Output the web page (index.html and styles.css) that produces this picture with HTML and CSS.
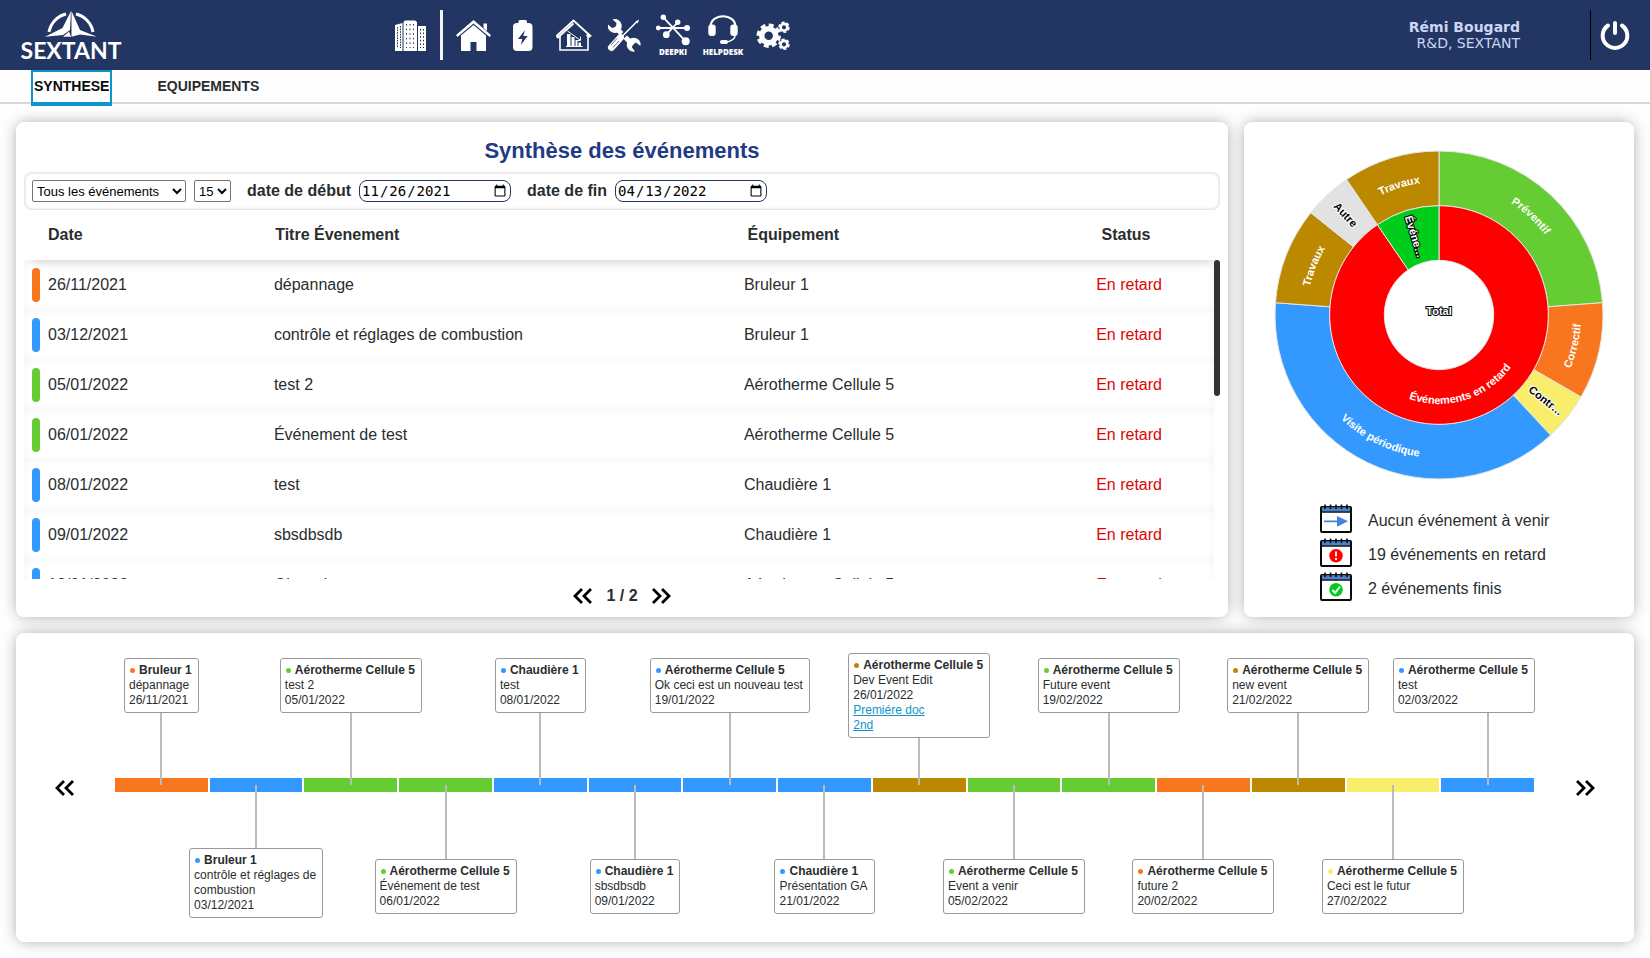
FILE: index.html
```html
<!DOCTYPE html>
<html lang="fr">
<head>
  <meta charset="UTF-8" />
  <meta name="viewport" content="width=device-width, initial-scale=1" />
  <title>Sextant - Synthèse des événements</title>
  <link rel="stylesheet" href="styles.css">
</head>
<body>
  <!-- Shared icons -->
  <svg class="sprite" aria-hidden="true">
    <symbol id="chevrons-left" viewBox="0 0 20 16">
      <path d="M9 1 L2 8 L9 15 M18 1 L11 8 L18 15" fill="none" stroke="#000" stroke-width="2.8" />
    </symbol>
    <symbol id="chevrons-right" viewBox="0 0 20 16">
      <path d="M2 1 L9 8 L2 15 M11 1 L18 8 L11 15" fill="none" stroke="#000" stroke-width="2.8" />
    </symbol>
    <symbol id="calendar" viewBox="0 0 32 30">
      <rect x="1" y="3" width="30" height="25" rx="1" fill="#fff" stroke="#0b0b0b" stroke-width="2" />
      <rect x="2" y="3" width="28" height="4.5" fill="#4682cf" />
      <path d="M1 8 H31 M1 2.6 H31" stroke="#0b0b0b" stroke-width="1.4" />
      <path d="M5 0.5 V5 M10.5 0.5 V5 M16 0.5 V5 M21.5 0.5 V5 M27 0.5 V5" stroke="#0b0b0b" stroke-width="1.6" />
    </symbol>
  </svg>

  <header class="topbar">
    <a class="logo" href="#" aria-label="Sextant">
      <svg width="104" height="50" viewBox="0 0 104 50" fill="#fff">
        <path d="M29 22 A22.5 22.5 0 0 1 46 4" fill="none" stroke="#fff" stroke-width="3" />
        <path d="M56 4 A22.5 22.5 0 0 1 73 22" fill="none" stroke="#fff" stroke-width="3" />
        <path d="M51 1 L42.5 18 L25 26.7 L43 25 L50 20 Z" />
        <path d="M51.5 1 L60 20 L77 26.7 L60 24.5 L51.5 26.7 Z" />
        <path d="M49 21.5 L43 26.7 H51 Z" />
        <text class="logo-text" x="51" y="49" text-anchor="middle">SEXTANT</text>
      </svg>
    </a>

    <nav class="main-nav" aria-label="Navigation principale">
      <a href="#" aria-label="Bâtiments">
        <svg viewBox="0 0 50 50" fill="#fff">
          <path d="M10 15 L17.5 13 V41 H10 Z M18.5 12 L20 10.5 H30 L32 12 V41 H18.5 Z M33 16 H41 V41 H33 Z" />
          <path d="M12.5 17 V38 M15.5 16 V38" stroke="#233563" stroke-width="1" stroke-dasharray="1.6 1" />
          <path d="M21.5 14 V38 M25 14 V38 M28.5 14 V38" stroke="#233563" stroke-width="1" stroke-dasharray="1.6 3" />
          <path d="M35.5 19 V38 M38.5 19 V38" stroke="#233563" stroke-width="1" stroke-dasharray="1.6 2" />
        </svg>
      </a>
      <span class="nav-separator"></span>
      <a href="#" aria-label="Accueil">
        <svg viewBox="0 0 50 50" fill="#fff">
          <path d="M25.5 10 L43 25 L41.5 27 L25.5 13.5 L9.5 27 L8 25 Z" />
          <path d="M35.5 13.5 H39 V21 L35.5 18 Z" />
          <path d="M25.5 15 L38 25.5 V41 H28.5 V32 H22.5 V41 H13 V25.5 Z" />
        </svg>
      </a>
      <a href="#" aria-label="Énergie">
        <svg viewBox="0 0 50 50" fill="#fff">
          <path d="M20.5 14 V11.5 Q20.5 10 22 10 H27.5 Q29 10 29 11.5 V14 Z" />
          <rect x="15" y="13" width="19.5" height="28" rx="4" />
          <path d="M27 20 L20 29 H24.3 L22.8 35 L29.7 26 H25.2 Z" fill="#233563" />
        </svg>
      </a>
      <a href="#" aria-label="Consommations">
        <svg viewBox="0 0 50 50" fill="#fff">
          <path d="M8.5 26 L25.5 10.5 L42.5 26 L41 27 L38.5 25 M8.5 26 L10 27.5 L25.5 13.5" fill="none" stroke="#fff" stroke-width="1.8" />
          <path d="M12 25 V40 H40 V25" fill="none" stroke="#fff" stroke-width="1.6" />
          <path d="M19 24 H22.5 V36 H19 Z M23.5 27 H26.5 V36 H23.5 Z M27.5 30 H29.5 V36 H27.5 Z M30.5 32.5 H33 V36 H30.5 Z M18 36 H34.5 V37 H18 Z" />
          <path d="M19.5 21 L32 30 M32.5 26.5 V30.5 H28.5" fill="none" stroke="#fff" stroke-width="1" />
        </svg>
      </a>
      <a href="#" aria-label="Maintenance">
        <svg viewBox="0 0 50 50" fill="#fff">
          <path d="M17 17 L35 35" stroke="#fff" stroke-width="5" />
          <path d="M14.5 9.5 A7 7 0 1 1 10 14.5 L14 18 L18 17 L18.5 13 Z" />
          <path d="M37 41.5 A7 7 0 1 1 42.5 36 L38 32.5 L34.5 34 L34 37.5 Z" />
          <path d="M40 10.5 L22 29" stroke="#233563" stroke-width="5" />
          <path d="M39 11.5 L22 28.5" stroke="#fff" stroke-width="1.6" />
          <path d="M37.5 11.5 L41 9.5 L39.8 13.5 Z" />
          <path d="M23 27 L14 37" stroke="#233563" stroke-width="10" />
          <path d="M22.5 27.5 L13.5 37.5" stroke="#fff" stroke-width="7" stroke-linecap="round" />
          <path d="M21 31 L15 37.5 M19 28.5 L13 35" stroke="#233563" stroke-width="0.7" />
        </svg>
      </a>
      <a href="#" aria-label="Deepki">
        <svg viewBox="0 0 50 50" fill="#fff">
          <path d="M15.3 7.3 L37.7 31.3 M29.7 12.3 L18.3 24.7 M10.3 18 H39" stroke="#fff" stroke-width="1.8" />
          <circle cx="15.3" cy="7.3" r="2.7" />
          <circle cx="29.7" cy="12.3" r="2.7" />
          <circle cx="10.3" cy="18" r="2.4" />
          <circle cx="39" cy="18" r="3" />
          <circle cx="18.3" cy="24.7" r="3.4" />
          <circle cx="37.7" cy="31.3" r="4" />
          <text class="nav-label" x="25" y="45" text-anchor="middle">DEEPKI</text>
        </svg>
      </a>
      <a href="#" aria-label="Helpdesk">
        <svg viewBox="0 0 50 50" fill="#fff">
          <path d="M12.5 17 C12.5 2.5 37.5 2.5 37.5 17" fill="none" stroke="#fff" stroke-width="2" />
          <rect x="10.3" y="14.5" width="7.4" height="11.5" rx="3" />
          <rect x="32.3" y="14.5" width="7.4" height="11.5" rx="3" />
          <path d="M37.5 24 Q37 31.5 27 32" fill="none" stroke="#fff" stroke-width="1.4" />
          <rect x="22" y="30" width="8" height="4" rx="2" />
          <text class="nav-label" x="25" y="45" text-anchor="middle">HELPDESK</text>
        </svg>
      </a>
      <a href="#" aria-label="Paramètres">
        <svg viewBox="0 0 50 50" fill="none" stroke="#fff">
          <circle cx="20.7" cy="25.7" r="7" stroke-width="5.5" />
          <circle cx="20.7" cy="25.7" r="10.6" stroke-width="3.2" pathLength="16" stroke-dasharray="1.2 0.8" />
          <circle cx="36" cy="17.3" r="3.4" stroke-width="2.6" />
          <circle cx="36" cy="17.3" r="5" stroke-width="1.6" pathLength="12" stroke-dasharray="1.2 0.8" />
          <circle cx="36" cy="34.3" r="3.4" stroke-width="2.6" />
          <circle cx="36" cy="34.3" r="5" stroke-width="1.6" pathLength="12" stroke-dasharray="1.2 0.8" />
        </svg>
      </a>
    </nav>

    <div class="user">
      <strong>Rémi Bougard</strong>
      <span>R&amp;D, SEXTANT</span>
    </div>
    <button class="power" type="button" aria-label="Déconnexion">
      <svg width="30" height="30" viewBox="0 0 30 30" fill="none" stroke="#fff" stroke-width="4" stroke-linecap="round">
        <path d="M8 5.5 A12.3 12.3 0 1 0 22 5.5 M15 3 V13" />
      </svg>
    </button>
  </header>

  <nav class="tabs" aria-label="Onglets">
    <a class="tab active" href="#">SYNTHESE</a>
    <a class="tab" href="#">EQUIPEMENTS</a>
  </nav>

  <main class="dashboard">
    <section class="card events">
      <h1>Synthèse des événements</h1>
      <form class="filters">
        <select class="select-type" aria-label="Type d'événement">
          <option>Tous les événements</option>
        </select>
        <select class="select-count" aria-label="Nombre par page">
          <option>15</option>
        </select>
        <label for="start">date de début</label>
        <input id="start" type="date" value="2021-11-26">
        <label for="end">date de fin</label>
        <input id="end" type="date" value="2022-04-13">
      </form>

      <div class="table-wrap">
        <table class="events-table">
          <thead>
            <tr><th>Date</th><th>Titre Évenement</th><th>Équipement</th><th>Status</th></tr>
          </thead>
          <tbody>
            <tr class="orange"><td>26/11/2021</td><td>dépannage</td><td>Bruleur 1</td><td>En retard</td></tr>
            <tr class="blue"><td>03/12/2021</td><td>contrôle et réglages de combustion</td><td>Bruleur 1</td><td>En retard</td></tr>
            <tr class="green"><td>05/01/2022</td><td>test 2</td><td>Aérotherme Cellule 5</td><td>En retard</td></tr>
            <tr class="green"><td>06/01/2022</td><td>Événement de test</td><td>Aérotherme Cellule 5</td><td>En retard</td></tr>
            <tr class="blue"><td>08/01/2022</td><td>test</td><td>Chaudière 1</td><td>En retard</td></tr>
            <tr class="blue"><td>09/01/2022</td><td>sbsdbsdb</td><td>Chaudière 1</td><td>En retard</td></tr>
            <tr class="blue"><td>19/01/2022</td><td>Ok ceci est un nouveau test</td><td>Aérotherme Cellule 5</td><td>En retard</td></tr>
            <tr class="blue"><td>21/01/2022</td><td>Présentation GA</td><td>Chaudière 1</td><td>En retard</td></tr>
            <tr class="brown"><td>26/01/2022</td><td>Dev Event Edit</td><td>Aérotherme Cellule 5</td><td>En retard</td></tr>
            <tr class="green"><td>05/02/2022</td><td>Event a venir</td><td>Aérotherme Cellule 5</td><td>En retard</td></tr>
            <tr class="green"><td>19/02/2022</td><td>Future event</td><td>Aérotherme Cellule 5</td><td>En retard</td></tr>
            <tr class="orange"><td>20/02/2022</td><td>future 2</td><td>Aérotherme Cellule 5</td><td>En retard</td></tr>
            <tr class="brown"><td>21/02/2022</td><td>new event</td><td>Aérotherme Cellule 5</td><td>En retard</td></tr>
            <tr class="yellow"><td>27/02/2022</td><td>Ceci est le futur</td><td>Aérotherme Cellule 5</td><td>En retard</td></tr>
            <tr class="blue"><td>02/03/2022</td><td>test</td><td>Aérotherme Cellule 5</td><td>En retard</td></tr>
          </tbody>
        </table>
        <div class="scroll-thumb"></div>
      </div>

      <div class="pagination">
        <button type="button" aria-label="Page précédente"><svg width="20" height="16"><use href="#chevrons-left" /></svg></button>
        <span>1 / 2</span>
        <button type="button" aria-label="Page suivante"><svg width="20" height="16"><use href="#chevrons-right" /></svg></button>
      </div>
    </section>

    <section class="card stats">
      <!-- Sunburst: 21 events, status on the inner ring and type on the outer one -->
      <svg class="sunburst" viewBox="-165 -165 330 330">
        <defs>
          <path id="arc-type-top" d="M-133 0 A133 133 0 0 1 133 0" />
          <path id="arc-type-right" d="M0 142 A142 142 0 0 0 0 -142" />
          <path id="arc-type-left" d="M0 132 A132 132 0 0 1 0 -132" />
          <path id="arc-type-bottom" d="M-143 0 A143 143 0 0 0 143 0" />
          <path id="arc-status" d="M-89 0 A89 89 0 0 0 89 0" />
        </defs>
        <g class="slices">
          <path fill="#66cc33" d="M0 -164 A164 164 0 0 1 163.5 -12.3 L109 -8.2 A109.3 109.3 0 0 0 0 -109.3 Z" />
          <path fill="#f8761d" d="M163.5 -12.3 A164 164 0 0 1 142 82 L94.7 54.7 A109.3 109.3 0 0 0 109 -8.2 Z" />
          <path fill="#f9ed6c" d="M142 82 A164 164 0 0 1 111.6 120.2 L74.3 80.1 A109.3 109.3 0 0 0 94.7 54.7 Z" />
          <path fill="#3399ff" d="M111.6 120.2 A164 164 0 0 1 -163.5 -12.3 L-109 -8.2 A109.3 109.3 0 0 0 74.3 80.1 Z" />
          <path fill="#bb8800" d="M-163.5 -12.3 A164 164 0 0 1 -128.2 -102.3 L-85.5 -68.1 A109.3 109.3 0 0 0 -109 -8.2 Z" />
          <path fill="#e2e2e2" d="M-128.2 -102.3 A164 164 0 0 1 -92.4 -135.5 L-61.6 -90.3 A109.3 109.3 0 0 0 -85.5 -68.1 Z" />
          <path fill="#bb8800" d="M-92.4 -135.5 A164 164 0 0 1 0 -164 L0 -109.3 A109.3 109.3 0 0 0 -61.6 -90.3 Z" />
          <path fill="#ff0000" d="M0 -109.3 A109.3 109.3 0 1 1 -61.6 -90.3 L-30.8 -45.2 A54.7 54.7 0 1 0 0 -54.7 Z" />
          <path fill="#00cc1b" d="M-61.6 -90.3 A109.3 109.3 0 0 1 0 -109.3 L0 -54.7 A54.7 54.7 0 0 0 -30.8 -45.2 Z" />
        </g>
        <g class="slice-labels">
          <text><textPath href="#arc-type-top" startOffset="73.8%">Préventif</textPath></text>
          <text><textPath href="#arc-type-right" startOffset="42.8%">Correctif</textPath></text>
          <text><textPath href="#arc-type-bottom" startOffset="35.7%">Visite périodique</textPath></text>
          <text><textPath href="#arc-type-left" startOffset="61.9%">Travaux</textPath></text>
          <text><textPath href="#arc-type-top" startOffset="40.5%">Travaux</textPath></text>
          <text><textPath href="#arc-status" startOffset="59.5%">Événements en retard</textPath></text>
          <text class="dark" transform="rotate(47.1) translate(-137 4)">Autre</text>
          <text class="dark" transform="rotate(38.6) translate(137 4)">Contr…</text>
          <text class="outlined" transform="rotate(72.9) translate(-82 4)">Événe…</text>
          <text class="outlined" y="0">Total</text>
        </g>
      </svg>

      <ul class="legend">
        <li>
          <svg width="32" height="30" viewBox="0 0 32 30"><use href="#calendar" /><path d="M4 16.5 H17 V12 L28 17.3 L17 22.8 V18.2 H4 Z" fill="#4682e0" /></svg>
          <span>Aucun événement à venir</span>
        </li>
        <li>
          <svg width="32" height="30" viewBox="0 0 32 30"><use href="#calendar" /><circle cx="16" cy="17.8" r="6.8" fill="#f00" /><path d="M16 13.5 V18.5 M16 20 V22" stroke="#fff" stroke-width="1.8" /></svg>
          <span>19 événements en retard</span>
        </li>
        <li>
          <svg width="32" height="30" viewBox="0 0 32 30"><use href="#calendar" /><circle cx="16" cy="17.8" r="6.8" fill="#00cc1b" /><path d="M12.5 18 L15 21 L20 14.5" fill="none" stroke="#fff" stroke-width="2" /></svg>
          <span>2 événements finis</span>
        </li>
      </ul>
    </section>

    <section class="card timeline">
      <button class="timeline-nav" type="button" aria-label="Événements précédents"><svg width="20" height="16"><use href="#chevrons-left" /></svg></button>
      <ol class="timeline-events">
        <li class="up orange"><div class="bubble"><b>Bruleur 1</b><p>dépannage</p><p>26/11/2021</p></div></li>
        <li class="down tall blue"><div class="bubble"><b>Bruleur 1</b><p>contrôle et réglages de<br>combustion</p><p>03/12/2021</p></div></li>
        <li class="up green"><div class="bubble"><b>Aérotherme Cellule 5</b><p>test 2</p><p>05/01/2022</p></div></li>
        <li class="down green"><div class="bubble"><b>Aérotherme Cellule 5</b><p>Événement de test</p><p>06/01/2022</p></div></li>
        <li class="up blue"><div class="bubble"><b>Chaudière 1</b><p>test</p><p>08/01/2022</p></div></li>
        <li class="down blue"><div class="bubble"><b>Chaudière 1</b><p>sbsdbsdb</p><p>09/01/2022</p></div></li>
        <li class="up blue"><div class="bubble"><b>Aérotherme Cellule 5</b><p>Ok ceci est un nouveau test</p><p>19/01/2022</p></div></li>
        <li class="down blue"><div class="bubble"><b>Chaudière 1</b><p>Présentation GA</p><p>21/01/2022</p></div></li>
        <li class="up tall brown"><div class="bubble"><b>Aérotherme Cellule 5</b><p>Dev Event Edit</p><p>26/01/2022</p><p><a href="#">Premiére doc</a></p><p><a href="#">2nd</a></p></div></li>
        <li class="down green"><div class="bubble"><b>Aérotherme Cellule 5</b><p>Event a venir</p><p>05/02/2022</p></div></li>
        <li class="up green"><div class="bubble"><b>Aérotherme Cellule 5</b><p>Future event</p><p>19/02/2022</p></div></li>
        <li class="down orange"><div class="bubble"><b>Aérotherme Cellule 5</b><p>future 2</p><p>20/02/2022</p></div></li>
        <li class="up brown"><div class="bubble"><b>Aérotherme Cellule 5</b><p>new event</p><p>21/02/2022</p></div></li>
        <li class="down yellow"><div class="bubble"><b>Aérotherme Cellule 5</b><p>Ceci est le futur</p><p>27/02/2022</p></div></li>
        <li class="up blue"><div class="bubble"><b>Aérotherme Cellule 5</b><p>test</p><p>02/03/2022</p></div></li>
      </ol>
      <button class="timeline-nav" type="button" aria-label="Événements suivants"><svg width="20" height="16"><use href="#chevrons-right" /></svg></button>
    </section>
  </main>
</body>
</html>
```
FILE: styles.css
```css
:root {
  --navy: #233563;
  --accent: #0f94c9;
  --text: #2a2d2e;
}

* {
  box-sizing: border-box;
}

body {
  margin: 0;
  background: #fefefe;
  color: var(--text);
  font-family: "Liberation Sans", Arial, sans-serif;
  font-size: 16px;
  line-height: 24px;
}

button {
  padding: 0;
  border: 0;
  background: none;
  cursor: pointer;
}

svg {
  display: block;
}

.sprite {
  position: absolute;
  width: 0;
  height: 0;
}

/* Event type colours */
.orange { --type: #f8761d; }
.blue { --type: #3399ff; }
.green { --type: #66cc33; }
.brown { --type: #bb8800; }
.yellow { --type: #f9ed6c; }

/* Top bar */
.topbar {
  display: flex;
  align-items: center;
  height: 70px;
  background: var(--navy);
}

.logo {
  flex: 0 0 365px;
  margin-left: 20px;
}

.logo-text {
  font: bold 23px Lato, sans-serif;
}

.main-nav {
  display: flex;
  align-items: center;
}

.main-nav svg {
  width: 50px;
  height: 50px;
}

.nav-separator {
  width: 3px;
  height: 50px;
  margin: 0 5px;
  background: #f0f3fb;
}

.nav-label {
  font: 800 8px "Open Sans", sans-serif;
}

.user {
  display: flex;
  flex-direction: column;
  margin-left: auto;
  margin-right: 70px;
  color: #ccd7f5;
  font-family: "DejaVu Sans", sans-serif;
  font-size: 14px;
  line-height: 16px;
  text-align: right;
}

.power {
  width: 60px;
  height: 50px;
  padding-left: 9px;
  border-left: 1px solid #000;
}

/* Tabs */
.tabs {
  display: flex;
  gap: 42px;
  height: 34px;
  padding-left: 31px;
  border-bottom: 2px solid #d8dada;
}

.tab {
  height: 36px;
  padding: 0 3px;
  color: var(--text);
  font-size: 14px;
  font-weight: bold;
  line-height: 32px;
  text-decoration: none;
}

.tab.active {
  padding: 0 1px;
  border: 2px solid var(--accent);
  border-bottom-width: 4px;
  color: #0a0a0a;
  line-height: 28px;
}

/* Cards */
.dashboard {
  display: grid;
  grid-template-columns: minmax(0, 1212fr) minmax(0, 390fr);
  gap: 16px;
  padding: 18px 16px 16px;
}

.card {
  border-radius: 8px;
  background: #fff;
  box-shadow: 0 0 16px -2px rgba(0, 0, 0, 0.4);
}

/* Events list */
.events {
  padding: 8px 8px 4px;
}

.events h1 {
  margin: 0;
  padding: 5px 0;
  color: #1f3b82;
  font-size: 22px;
  line-height: 32px;
  text-align: center;
}

.filters {
  display: flex;
  align-items: center;
  gap: 8px;
  height: 38px;
  padding: 0 8px;
  border-radius: 8px;
  box-shadow: inset 0 0 3px 1px rgba(0, 0, 0, 0.15);
}

.filters select,
.filters input {
  height: 22px;
}

.filters select {
  padding: 0;
  border: 1px solid #767676;
  border-radius: 2px;
  background: #fff;
  color: #000;
  font: 13px "Liberation Sans", Arial, sans-serif;
}

.filters .select-type {
  width: 154px;
}

.filters .select-count {
  width: 37px;
}

.filters label {
  margin-left: 8px;
  font-weight: bold;
}

.filters input {
  width: 152px;
  padding: 0 1px;
  border: 1px solid var(--navy);
  border-radius: 8px;
  background: #fff;
  color: #000;
  font: 14px "DejaVu Sans Mono", monospace;
}

.table-wrap {
  position: relative;
}

.events-table,
.events-table thead,
.events-table tbody {
  display: block;
}

.events-table tr {
  display: grid;
  grid-template-columns: 21% 39.5% 29.6% 1fr;
  align-items: center;
  height: 50px;
}

.events-table thead {
  position: relative;
  box-shadow: 0 10px 10px -8px rgba(0, 0, 0, 0.16);
}

.events-table tbody {
  height: 319px;
  margin-right: 6px;
  overflow-y: auto;
  scrollbar-width: none;
}

/* Thin scrollbar beside the rows */
.scroll-thumb {
  position: absolute;
  top: 50px;
  right: 0;
  width: 6px;
  height: 136px;
  border-radius: 3px;
  background: #333;
}

.events-table tbody tr {
  box-shadow: inset 0 0 8px rgba(0, 0, 0, 0.05);
}

.events-table th,
.events-table td {
  padding: 0;
  text-align: left;
}

.events-table th:first-child {
  padding-left: 24px;
}

.events-table td:first-child {
  display: flex;
  align-items: center;
  gap: 8px;
  padding-left: 8px;
}

.events-table td:first-child::before {
  content: "";
  width: 8px;
  height: 34px;
  border-radius: 4px;
  background: var(--type);
}

.events-table td:last-child {
  color: #dd0505;
}

.pagination {
  display: flex;
  justify-content: center;
  align-items: center;
  gap: 13px;
  height: 34px;
  font-weight: bold;
}

/* Chart and legend */
.stats {
  padding-top: 28px;
}

.sunburst {
  width: 330px;
  max-width: 100%;
  margin: 0 auto;
}

.slices path {
  stroke: #e6e6e6;
  stroke-width: 1;
}

.slice-labels text {
  fill: #fff;
  font: bold 11px "Liberation Sans", Arial, sans-serif;
  text-anchor: middle;
}

.slice-labels .dark {
  fill: #000;
  stroke: #fff;
  stroke-width: 2px;
  paint-order: stroke;
}

.slice-labels .outlined {
  stroke: #000;
  stroke-width: 2px;
  paint-order: stroke;
}

.legend {
  margin: 0;
  padding: 24px 0 0 76px;
  list-style: none;
}

.legend li {
  display: flex;
  align-items: center;
  gap: 16px;
  height: 34px;
}

.legend svg {
  align-self: flex-start;
}

/* Timeline */
.timeline {
  display: flex;
  grid-column: 1 / -1;
}

.timeline-nav {
  display: flex;
  flex: 0 0 98px;
  justify-content: center;
  align-items: center;
}

.timeline-events {
  display: grid;
  flex: 1;
  grid-template-columns: repeat(15, minmax(0, 1fr));
  margin: 0 1px 0 0;
  padding: 0;
  list-style: none;
  font-size: 12px;
  line-height: 15px;
}

.timeline-events li {
  display: flex;
  flex-direction: column;
  align-items: center;
  height: 309px;
}

/* Coloured segment */
.timeline-events li::before {
  content: "";
  flex: 0 0 14px;
  align-self: stretch;
  margin: 0 1px;
  background: var(--type);
}

/* Line between the segment and its bubble */
.timeline-events li::after {
  content: "";
  flex: 1;
  width: 2px;
  background: #bbb;
}

.timeline-events .up {
  padding: 25px 0 150px;
}

.timeline-events .up.tall {
  padding-top: 20px;
}

.timeline-events .up::before {
  order: 3;
}

.timeline-events .up::after {
  order: 2;
  z-index: 1;
  margin-bottom: -7px;
}

.timeline-events .down {
  padding: 145px 0 28px;
}

.timeline-events .down.tall {
  padding-bottom: 24px;
}

.timeline-events .down::after {
  order: 1;
  z-index: 1;
  margin-top: -7px;
}

.timeline-events .down .bubble {
  order: 2;
}

.bubble {
  padding: 4px 6px 4px 4px;
  border: 1px solid #999;
  border-radius: 3px;
  background: #fff;
  white-space: nowrap;
}

.timeline-events li:last-child .bubble {
  align-self: flex-end;
}

.bubble b {
  display: flex;
  align-items: center;
}

.bubble b::before {
  content: "";
  width: 5px;
  height: 5px;
  margin: 0 4px 0 1px;
  border-radius: 50%;
  background: var(--type);
}

.bubble p {
  margin: 0;
}

.bubble a {
  color: var(--accent);
}
```
